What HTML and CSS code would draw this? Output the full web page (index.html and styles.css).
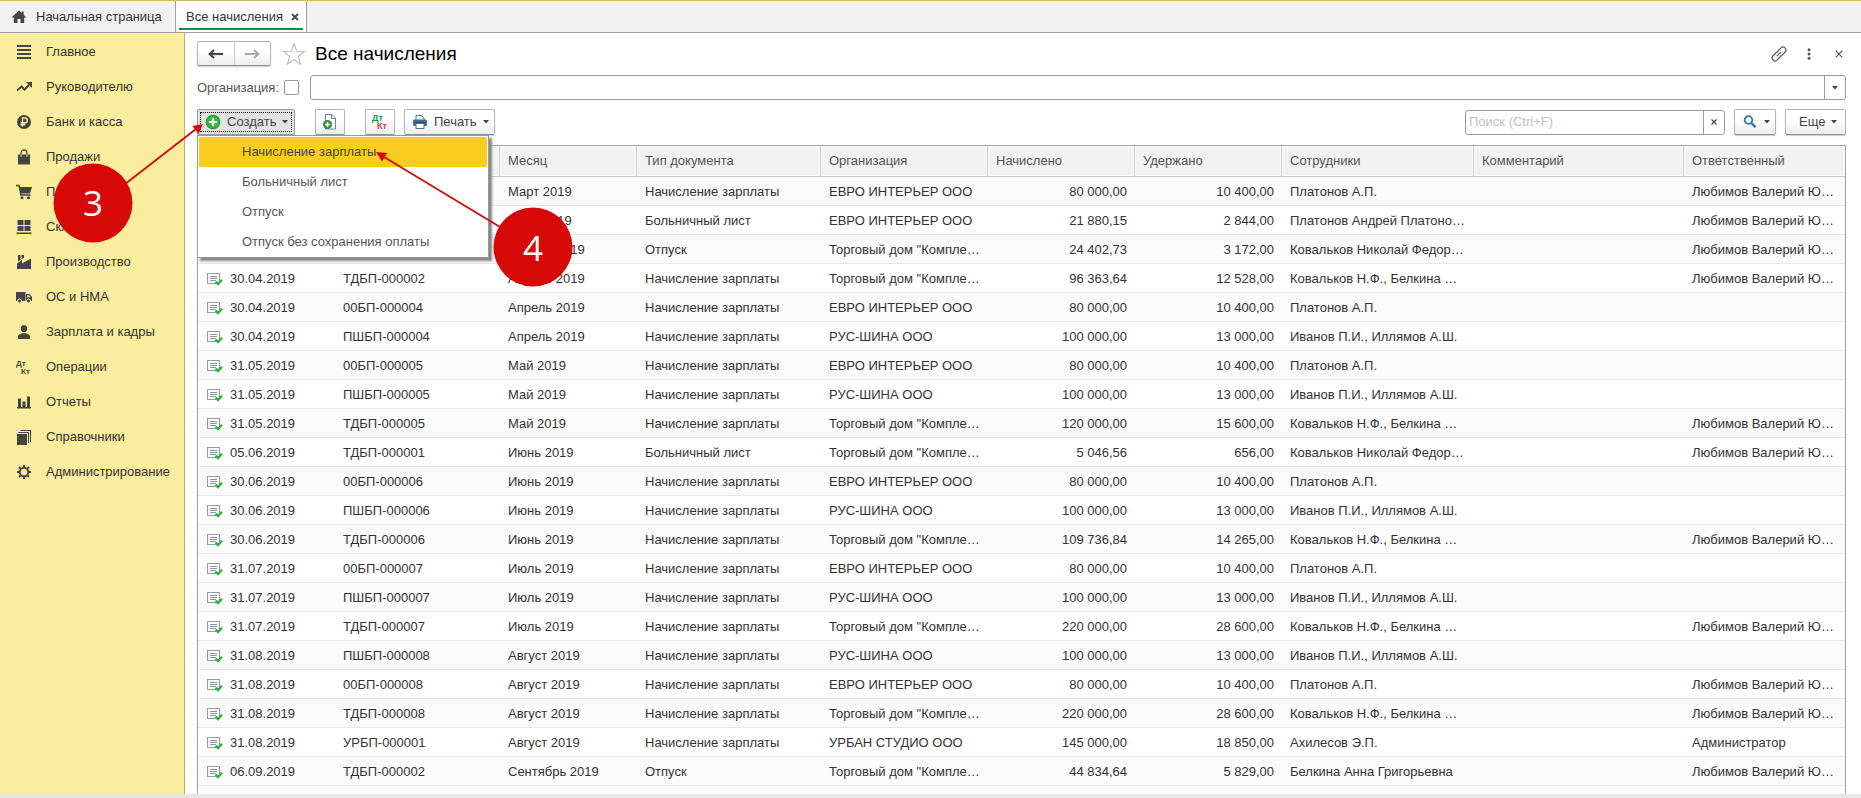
FILE: index.html
```html
<!DOCTYPE html>
<html lang="ru">
<head>
<meta charset="utf-8">
<title>Все начисления</title>
<link rel="stylesheet" href="styles.css">
</head>
<body>
<svg class="sprite" aria-hidden="true">
  <symbol id="doc" viewBox="0 0 16 14">
    <rect x="0.5" y="1.5" width="12" height="10" fill="#fff" stroke="#8d9cb0"/>
    <path d="M3 4.5h7M3 6.5h7M3 8.5h6" stroke="#8796a8" fill="none"/>
    <path d="M8.6 9.6l2.4 2.4 3.9-4.3" stroke="#2bb52f" stroke-width="2.4" fill="none"/>
  </symbol>
  <symbol id="caret" viewBox="0 0 6 4"><path d="M0 0h6L3 3.6z" fill="#444"/></symbol>
</svg>
<div class="app">
  <nav class="tabs">
    <a class="tab home" href="#">
      <svg width="16" height="14" viewBox="0 0 16 14"><path d="M8 0.5L0.5 7.5h2.3V13h3.7V9h3v4h3.7V7.5h2.3L12.7 5V1.5h-2v1.6z" fill="#444"/></svg>
      <span>Начальная страница</span>
    </a>
    <div class="tab active">
      <a href="#">Все начисления</a>
      <button class="tab-close" aria-label="Закрыть вкладку"><svg width="8" height="8" viewBox="0 0 8 8"><path d="M1 1l6 6M7 1L1 7" stroke="#444" stroke-width="1.8"/></svg></button>
    </div>
  </nav>
  <div class="body">
    <nav class="sidebar">
      <a href="#"><svg width="16" height="16" viewBox="0 0 16 16"><path d="M1 2h14M1 6h14M1 10h14M1 14h14" stroke="#444" stroke-width="2"/></svg>Главное</a>
      <a href="#"><svg width="16" height="16" viewBox="0 0 16 16"><path d="M1 11.5l4.5-4 3 3 4.500-4.500" stroke="#444" stroke-width="2" fill="none"/><path d="M10 3h6v6z" fill="#444"/></svg>Руководителю</a>
      <a href="#"><svg width="16" height="16" viewBox="0 0 16 16"><circle cx="8" cy="8" r="7" fill="#444"/><path d="M6.5 12.5V4h2.3a2.4 2.4 0 0 1 0 5H4.6M4.6 10.8h4.6" stroke="#fbed9e" stroke-width="1.4" fill="none"/></svg>Банк и касса</a>
      <a href="#"><svg width="16" height="16" viewBox="0 0 16 16"><path d="M2 5.500h12V15.500H2z" fill="#444"/><path d="M5 6V4a3 3 0 0 1 6 0v2" stroke="#444" stroke-width="1.300" fill="none"/><path d="M5 5.500v2.500M11 5.500v2.500" stroke="#fbed9e"/></svg>Продажи</a>
      <a href="#"><svg width="16" height="16" viewBox="0 0 16 16"><path d="M0 1.5h3L5 11h9.500" stroke="#444" stroke-width="1.500" fill="none"/><path d="M3.500 3H16l-2 6.500H5z" fill="#444"/><circle cx="6" cy="13.800" r="1.500" fill="#444"/><circle cx="12.500" cy="13.800" r="1.500" fill="#444"/></svg>Покупки</a>
      <a href="#"><svg width="16" height="16" viewBox="0 0 16 16"><path d="M1.500 1h6v5h-6zM8.500 1h6v5h-6zM1.500 7h6v5h-6zM8.500 7h6v5h-6zM0.500 13.500h15v1.500h-15z" fill="#444"/></svg>Склад</a>
      <a href="#"><svg width="16" height="16" viewBox="0 0 16 16"><path d="M1 15V9.500l5-3.500v3.500l9-5V15zM2 7.500V1h2.500v5zM5.500 5V1H8v3z" fill="#444"/></svg>Производство</a>
      <a href="#"><svg width="16" height="16" viewBox="0 0 16 16"><path d="M0 3h9.500v9H0zM10 5h3.500L16 8v4h-6z" fill="#444"/><path d="M11.200 6.200h2l1.300 2h-3.300z" fill="#fbed9e"/><g fill="#444" stroke="#fbed9e" stroke-width="1"><circle cx="3.500" cy="12" r="2"/><circle cx="12.500" cy="12" r="2"/></g></svg>ОС и НМА</a>
      <a href="#"><svg width="16" height="16" viewBox="0 0 16 16"><path d="M8 1c2.200 0 3.200 1.500 3.200 3.600S9.800 8.500 8 8.500 4.800 6.700 4.800 4.600 5.800 1 8 1zM2 15v-2.500C2 10.500 5 10 6.200 9.300h3.600C11 10 14 10.500 14 12.500V15z" fill="#444"/></svg>Зарплата и кадры</a>
      <a href="#"><svg class="dk" width="16" height="16" viewBox="0 0 16 16"><text x="0" y="7">Дт</text><text x="5" y="15">Кт</text></svg>Операции</a>
      <a href="#"><svg width="16" height="16" viewBox="0 0 16 16"><path d="M1 13h14v1.500H1zM2 4.500h3V13H2zM6.500 7.500h3V13h-3zM11 2.500h3V13h-3z" fill="#444"/></svg>Отчеты</a>
      <a href="#"><svg width="16" height="16" viewBox="0 0 16 16"><path d="M1 5h10v11H1z" fill="#444"/><path d="M2.500 3.500h10V14M4.500 1.500h10V13" stroke="#444" fill="none"/></svg>Справочники</a>
      <a href="#"><svg width="16" height="16" viewBox="0 0 16 16"><circle cx="8" cy="8" r="4.300" stroke="#444" stroke-width="1.900" fill="none"/><path d="M8 1v2.500M8 12.500V15M1 8h2.500M12.500 8H15M3 3l1.900 1.900M11.100 11.100L13 13M13 3l-1.900 1.900M4.900 11.100L3 13" stroke="#444" stroke-width="2"/></svg>Администрирование</a>
    </nav>
    <main class="content">
      <header class="title-row">
        <div class="nav-pair">
          <button aria-label="Назад"><svg width="15" height="10" viewBox="0 0 15 10"><path d="M3 5h12" stroke="#444" stroke-width="2.200"/><path d="M6 1L1.700 5 6 9" stroke="#444" stroke-width="2.200" fill="none"/></svg></button>
          <button aria-label="Вперед"><svg width="15" height="10" viewBox="0 0 15 10"><path d="M12 5H0" stroke="#aaa" stroke-width="2"/><path d="M9 1l4.300 4L9 9" stroke="#aaa" stroke-width="2" fill="none"/></svg></button>
        </div>
        <button class="plain" aria-label="В избранное"><svg width="24" height="24" viewBox="0 0 24 24"><path d="M12 1.500l2.700 7.700 8 .2-6.400 4.900 2.300 7.800-6.600-4.600-6.600 4.600 2.300-7.800L1.300 9.400l8-.2z" fill="#fff" stroke="#b4bac2" stroke-width="1.100"/></svg></button>
        <h1>Все начисления</h1>
        <div class="window-tools">
          <button class="plain" aria-label="Ссылка"><svg width="16" height="16" viewBox="0 0 16 16" fill="none" stroke="#555" stroke-width="1.200"><path d="M6.500 5.500L10 1.800a2.600 2.600 0 0 1 4 .2 2.600 2.600 0 0 1 .2 4L10.800 9.500a2.500 2.500 0 0 1-2 .5"/><path d="M9.500 10.500L6 14.200a2.600 2.600 0 0 1-4-.2 2.600 2.600 0 0 1-.2-4L5.200 6.500a2.500 2.500 0 0 1 2-.5M5.800 10.200l4.400-4.400"/></svg></button>
          <button class="plain" aria-label="Меню"><svg width="4" height="12" viewBox="0 0 4 12" fill="#555"><circle cx="2" cy="1.700" r="1.500"/><circle cx="2" cy="6" r="1.500"/><circle cx="2" cy="10.300" r="1.500"/></svg></button>
          <button class="plain" aria-label="Закрыть"><svg width="8" height="8" viewBox="0 0 8 8"><path d="M.7.700l6.600 6.600M7.300.700L.700 7.300" stroke="#555" stroke-width="1.200"/></svg></button>
        </div>
      </header>
      <div class="filter-row">
        <label for="org-on">Организация:</label>
        <input type="checkbox" id="org-on">
        <div class="field">
          <input type="text" aria-label="Организация">
          <button aria-label="Выбрать организацию"><svg width="6" height="4"><use href="#caret"/></svg></button>
        </div>
      </div>
      <div class="toolbar">
        <div class="create">
          <button class="btn create-btn"><svg width="16" height="16" viewBox="0 0 16 16"><circle cx="8" cy="8" r="6.700" fill="#3fb549" stroke="#27943a" stroke-width="1.200"/><path d="M8 4v8M4 8h8" stroke="#fff" stroke-width="2.200"/></svg><span>Создать</span><svg width="6" height="4"><use href="#caret"/></svg></button>
          <div class="menu" role="menu">
            <button class="current" role="menuitem">Начисление зарплаты</button>
            <button role="menuitem">Больничный лист</button>
            <button role="menuitem">Отпуск</button>
            <button role="menuitem">Отпуск без сохранения оплаты</button>
          </div>
        </div>
        <button class="btn icon-btn copy-btn" aria-label="Скопировать"><svg width="16" height="16" viewBox="0 0 16 16"><path d="M3.500.500h6.500l3.500 3.500v11h-10z" fill="#fff" stroke="#6c8399"/><path d="M9.500.500V4.500h4" fill="none" stroke="#6c8399"/><circle cx="5.500" cy="10.500" r="4.500" fill="#27943a"/><path d="M5.500 8v5M3 10.500h5" stroke="#fff" stroke-width="1.500"/></svg></button>
        <button class="btn icon-btn" aria-label="Проводки"><svg class="dk dk-color" width="18" height="18" viewBox="0 0 18 18"><text x="1" y="8">Дт</text><text x="6" y="16">Кт</text></svg></button>
        <button class="btn print-btn"><svg width="16" height="16" viewBox="0 0 16 16"><path d="M4 6V1.500h5.500L12 4v2" fill="#fff" stroke="#56758f"/><rect x="1" y="5.500" width="14" height="6.500" rx="1.500" fill="#3f6c91"/><path d="M3 8.500h10" stroke="#1f4664"/><path d="M4 9.500h8v5H4z" fill="#fff" stroke="#56758f"/></svg><span>Печать</span><svg width="6" height="4"><use href="#caret"/></svg></button>
        <div class="field search">
          <input type="text" placeholder="Поиск (Ctrl+F)" aria-label="Поиск">
          <button aria-label="Очистить"><svg width="6" height="6" viewBox="0 0 6 6"><path d="M.500.500l5 5M5.500.500l-5 5" stroke="#444" stroke-width="1.200"/></svg></button>
        </div>
        <button class="btn find-btn" aria-label="Найти"><svg width="14" height="14" viewBox="0 0 14 14"><circle cx="5.500" cy="5" r="3.800" fill="none" stroke="#2d77b4" stroke-width="1.800"/><path d="M8.300 8l4.200 4.200" stroke="#2d77b4" stroke-width="2.400"/></svg><svg width="6" height="4"><use href="#caret"/></svg></button>
        <button class="btn more-btn"><span>Еще</span><svg width="6" height="4"><use href="#caret"/></svg></button>
      </div>
      <div class="grid">
        <table>
          <colgroup><col class="c-date"><col class="c-num"><col class="c-month"><col class="c-type"><col class="c-org"><col class="c-sum"><col class="c-sum"><col class="c-staff"><col class="c-note"><col class="c-resp"></colgroup>
          <thead><tr><th>Дата</th><th>Номер</th><th>Месяц</th><th>Тип документа</th><th>Организация</th><th>Начислено</th><th>Удержано</th><th>Сотрудники</th><th>Комментарий</th><th>Ответственный</th></tr></thead>
          <tbody>
            <tr><td><svg><use href="#doc"/></svg>31.03.2019</td><td>00БП-000003</td><td>Март 2019</td><td>Начисление зарплаты</td><td>ЕВРО ИНТЕРЬЕР ООО</td><td>80 000,00</td><td>10 400,00</td><td>Платонов А.П.</td><td></td><td>Любимов Валерий Ю…</td></tr>
            <tr><td><svg><use href="#doc"/></svg>05.04.2019</td><td>00БП-000001</td><td>Март 2019</td><td>Больничный лист</td><td>ЕВРО ИНТЕРЬЕР ООО</td><td>21 880,15</td><td>2 844,00</td><td>Платонов Андрей Платоно…</td><td></td><td>Любимов Валерий Ю…</td></tr>
            <tr><td><svg><use href="#doc"/></svg>10.04.2019</td><td>ТДБП-000001</td><td>Апрель 2019</td><td>Отпуск</td><td>Торговый дом "Компле…</td><td>24 402,73</td><td>3 172,00</td><td>Ковальков Николай Федор…</td><td></td><td>Любимов Валерий Ю…</td></tr>
            <tr><td><svg><use href="#doc"/></svg>30.04.2019</td><td>ТДБП-000002</td><td>Апрель 2019</td><td>Начисление зарплаты</td><td>Торговый дом "Компле…</td><td>96 363,64</td><td>12 528,00</td><td>Ковальков Н.Ф., Белкина …</td><td></td><td>Любимов Валерий Ю…</td></tr>
            <tr><td><svg><use href="#doc"/></svg>30.04.2019</td><td>00БП-000004</td><td>Апрель 2019</td><td>Начисление зарплаты</td><td>ЕВРО ИНТЕРЬЕР ООО</td><td>80 000,00</td><td>10 400,00</td><td>Платонов А.П.</td><td></td><td></td></tr>
            <tr><td><svg><use href="#doc"/></svg>30.04.2019</td><td>ПШБП-000004</td><td>Апрель 2019</td><td>Начисление зарплаты</td><td>РУС-ШИНА ООО</td><td>100 000,00</td><td>13 000,00</td><td>Иванов П.И., Иллямов А.Ш.</td><td></td><td></td></tr>
            <tr><td><svg><use href="#doc"/></svg>31.05.2019</td><td>00БП-000005</td><td>Май 2019</td><td>Начисление зарплаты</td><td>ЕВРО ИНТЕРЬЕР ООО</td><td>80 000,00</td><td>10 400,00</td><td>Платонов А.П.</td><td></td><td></td></tr>
            <tr><td><svg><use href="#doc"/></svg>31.05.2019</td><td>ПШБП-000005</td><td>Май 2019</td><td>Начисление зарплаты</td><td>РУС-ШИНА ООО</td><td>100 000,00</td><td>13 000,00</td><td>Иванов П.И., Иллямов А.Ш.</td><td></td><td></td></tr>
            <tr><td><svg><use href="#doc"/></svg>31.05.2019</td><td>ТДБП-000005</td><td>Май 2019</td><td>Начисление зарплаты</td><td>Торговый дом "Компле…</td><td>120 000,00</td><td>15 600,00</td><td>Ковальков Н.Ф., Белкина …</td><td></td><td>Любимов Валерий Ю…</td></tr>
            <tr><td><svg><use href="#doc"/></svg>05.06.2019</td><td>ТДБП-000001</td><td>Июнь 2019</td><td>Больничный лист</td><td>Торговый дом "Компле…</td><td>5 046,56</td><td>656,00</td><td>Ковальков Николай Федор…</td><td></td><td>Любимов Валерий Ю…</td></tr>
            <tr><td><svg><use href="#doc"/></svg>30.06.2019</td><td>00БП-000006</td><td>Июнь 2019</td><td>Начисление зарплаты</td><td>ЕВРО ИНТЕРЬЕР ООО</td><td>80 000,00</td><td>10 400,00</td><td>Платонов А.П.</td><td></td><td></td></tr>
            <tr><td><svg><use href="#doc"/></svg>30.06.2019</td><td>ПШБП-000006</td><td>Июнь 2019</td><td>Начисление зарплаты</td><td>РУС-ШИНА ООО</td><td>100 000,00</td><td>13 000,00</td><td>Иванов П.И., Иллямов А.Ш.</td><td></td><td></td></tr>
            <tr><td><svg><use href="#doc"/></svg>30.06.2019</td><td>ТДБП-000006</td><td>Июнь 2019</td><td>Начисление зарплаты</td><td>Торговый дом "Компле…</td><td>109 736,84</td><td>14 265,00</td><td>Ковальков Н.Ф., Белкина …</td><td></td><td>Любимов Валерий Ю…</td></tr>
            <tr><td><svg><use href="#doc"/></svg>31.07.2019</td><td>00БП-000007</td><td>Июль 2019</td><td>Начисление зарплаты</td><td>ЕВРО ИНТЕРЬЕР ООО</td><td>80 000,00</td><td>10 400,00</td><td>Платонов А.П.</td><td></td><td></td></tr>
            <tr><td><svg><use href="#doc"/></svg>31.07.2019</td><td>ПШБП-000007</td><td>Июль 2019</td><td>Начисление зарплаты</td><td>РУС-ШИНА ООО</td><td>100 000,00</td><td>13 000,00</td><td>Иванов П.И., Иллямов А.Ш.</td><td></td><td></td></tr>
            <tr><td><svg><use href="#doc"/></svg>31.07.2019</td><td>ТДБП-000007</td><td>Июль 2019</td><td>Начисление зарплаты</td><td>Торговый дом "Компле…</td><td>220 000,00</td><td>28 600,00</td><td>Ковальков Н.Ф., Белкина …</td><td></td><td>Любимов Валерий Ю…</td></tr>
            <tr><td><svg><use href="#doc"/></svg>31.08.2019</td><td>ПШБП-000008</td><td>Август 2019</td><td>Начисление зарплаты</td><td>РУС-ШИНА ООО</td><td>100 000,00</td><td>13 000,00</td><td>Иванов П.И., Иллямов А.Ш.</td><td></td><td></td></tr>
            <tr><td><svg><use href="#doc"/></svg>31.08.2019</td><td>00БП-000008</td><td>Август 2019</td><td>Начисление зарплаты</td><td>ЕВРО ИНТЕРЬЕР ООО</td><td>80 000,00</td><td>10 400,00</td><td>Платонов А.П.</td><td></td><td>Любимов Валерий Ю…</td></tr>
            <tr><td><svg><use href="#doc"/></svg>31.08.2019</td><td>ТДБП-000008</td><td>Август 2019</td><td>Начисление зарплаты</td><td>Торговый дом "Компле…</td><td>220 000,00</td><td>28 600,00</td><td>Ковальков Н.Ф., Белкина …</td><td></td><td>Любимов Валерий Ю…</td></tr>
            <tr><td><svg><use href="#doc"/></svg>31.08.2019</td><td>УРБП-000001</td><td>Август 2019</td><td>Начисление зарплаты</td><td>УРБАН СТУДИО ООО</td><td>145 000,00</td><td>18 850,00</td><td>Ахилесов Э.П.</td><td></td><td>Администратор</td></tr>
            <tr><td><svg><use href="#doc"/></svg>06.09.2019</td><td>ТДБП-000002</td><td>Сентябрь 2019</td><td>Отпуск</td><td>Торговый дом "Компле…</td><td>44 834,64</td><td>5 829,00</td><td>Белкина Анна Григорьевна</td><td></td><td>Любимов Валерий Ю…</td></tr>
          </tbody>
        </table>
      </div>
    </main>
  </div>
  <svg class="callouts" width="600" height="300" viewBox="0 0 600 300">
    <g fill="#d60808" stroke="#d60808">
      <path d="M120 188L196 129M510 233L384 157" stroke-width="1.800" fill="none"/>
      <path d="M203 124l-4.500 10-6-8zM376 152l11 1-5 8.500z" stroke="none"/>
      <circle cx="93" cy="203" r="39.500" stroke="none"/>
      <circle cx="533" cy="247" r="39.500" stroke="none"/>
    </g>
    <text x="93" y="216">3</text>
    <text x="533" y="261">4</text>
  </svg>
</div>
</body>
</html>
```
FILE: styles.css
```css
* { box-sizing: border-box; }

body {
  margin: 0;
  background: #fff;
  color: #333;
  font: 13px/16px "Liberation Sans", Arial, sans-serif;
}

button, input { font: inherit; color: inherit; }
button { padding: 0; cursor: pointer; }
a { color: inherit; text-decoration: none; }
svg { display: block; flex: none; }
.sprite { position: absolute; width: 0; height: 0; }

.app {
  position: relative;
  display: flex;
  flex-direction: column;
  min-height: 100vh;
  border-bottom: 4px solid #e6e6e6;
}

/* Tabs */
.tabs {
  display: flex;
  height: 33px;
  background: #f1f1f1;
  border-top: 1px solid #cdb96a;
  border-bottom: 1px solid #a0a0a0;
}
.tab {
  display: flex;
  align-items: center;
  border-right: 1px solid #a0a0a0;
}
.home { gap: 9px; width: 176px; padding-left: 11px; }
.active {
  position: relative;
  gap: 8px;
  width: 131px;
  padding-left: 10px;
  background: #fff;
}
.active::after {
  content: "";
  position: absolute;
  left: 3px;
  right: 3px;
  bottom: 2px;
  height: 2px;
  background: #009646;
}
.tab-close { border: 0; background: none; }

/* Sections panel */
.body { display: flex; flex: 1; }
.sidebar {
  flex: none;
  width: 185px;
  padding-top: 1px;
  background: #fbed9e;
  border-right: 1px solid #bfae5b;
}
.sidebar a {
  display: flex;
  align-items: center;
  gap: 14px;
  height: 35px;
  padding-left: 16px;
}
.dk text { font-size: 8px; font-weight: 700; fill: #444; }
.dk-color text { font-size: 9px; fill: #0b9a4a; }
.dk-color text + text { fill: #e23b3b; }

/* Content */
.content {
  display: flex;
  flex: 1;
  flex-direction: column;
  min-width: 0;
  padding: 8px 15px 0 12px;
}
.title-row { display: flex; align-items: center; height: 25px; }
.nav-pair {
  display: flex;
  width: 74px;
  height: 25px;
  margin-right: 11px;
  border: 1px solid #b4b4b4;
  border-bottom-color: #909090;
  border-radius: 2px;
  background: linear-gradient(#fff 40%, #ececec);
  box-shadow: 0 1px 1px #ccc;
}
.nav-pair button {
  display: flex;
  flex: 1;
  align-items: center;
  justify-content: center;
  border: 0;
  background: none;
}
.nav-pair button + button { border-left: 1px solid #c8c8c8; }
.plain { border: 0; background: none; }
h1 {
  margin: 0 0 0 9px;
  color: #000;
  font-size: 19px;
  font-weight: 400;
  line-height: 24px;
}
.window-tools {
  display: flex;
  align-items: center;
  gap: 20px;
  margin-left: auto;
  padding-right: 3px;
}
.window-tools .plain + .plain + .plain { margin-left: 4px; }

.filter-row { display: flex; align-items: center; margin-top: 9px; color: #555; }
.filter-row input[type="checkbox"] {
  appearance: none;
  width: 15px;
  height: 15px;
  margin: 0 11px 0 0;
  border: 1px solid #999;
  border-radius: 2px;
  background: #fff;
}
.filter-row label { width: 87px; }
.field {
  display: flex;
  height: 25px;
  border: 1px solid #999;
  border-radius: 3px;
  background: #fff;
}
.filter-row .field { flex: 1; }
.field input {
  flex: 1;
  min-width: 0;
  padding: 0 3px;
  border: 0;
  outline: 0;
  background: none;
}
.field input::placeholder { color: #c0c0c4; opacity: 1; }
.field button {
  display: flex;
  align-items: center;
  justify-content: center;
  width: 21px;
  border: 0;
  border-left: 1px solid #999;
  background: none;
}

.toolbar { display: flex; align-items: center; margin-top: 9px; }
.btn {
  display: flex;
  align-items: center;
  height: 26px;
  border: 1px solid #b4b4b4;
  border-bottom-color: #909090;
  border-radius: 2px;
  background: linear-gradient(#fff 40%, #ececec);
  box-shadow: 0 1px 1px #ccc;
  color: #444;
}
.icon-btn { justify-content: center; width: 30px; }
.create { position: relative; }
.create-btn {
  gap: 6px;
  width: 98px;
  padding-left: 7px;
  border-color: #999;
  background: #e2e2e2;
  outline: 1px dotted #000;
  outline-offset: -4px;
}
.copy-btn { margin: 0 20px; }
.print-btn { gap: 6px; width: 91px; margin-left: 9px; padding-left: 7px; }
.search { width: 260px; margin-left: auto; }
.find-btn { gap: 7px; width: 42px; margin: 0 9px; padding-left: 8px; }
.more-btn { gap: 6px; width: 61px; padding-left: 13px; }

.menu {
  position: absolute;
  z-index: 2;
  top: 26px;
  left: 0;
  width: 292px;
  padding: 1px 1px 0;
  border: 1px solid #999;
  background: #fff;
  box-shadow: 3px 3px 2px #888;
}
.menu button {
  display: block;
  width: 100%;
  height: 30px;
  padding-left: 43px;
  border: 0;
  background: none;
  color: #555;
  text-align: left;
}
.menu .current { background: #facc20; color: #444; }

/* Document list */
.grid {
  flex: 1;
  margin-top: 10px;
  border: 1px solid #a0a0a0;
  border-bottom: 0;
}
table {
  width: 100%;
  table-layout: fixed;
  border-collapse: separate;
  border-spacing: 0;
}
.c-date { width: 137px; }
.c-num { width: 165px; }
.c-month { width: 137px; }
.c-type { width: 184px; }
.c-org { width: 167px; }
.c-sum { width: 147px; }
.c-staff { width: 192px; }
.c-note { width: 210px; }
.c-resp { width: 161px; }
th {
  height: 31px;
  padding: 0 8px;
  border-right: 1px solid #c8c8c8;
  border-bottom: 1px solid #c8c8c8;
  background: #f2f2f2;
  box-shadow: inset 0 0 0 1px #fff;
  color: #555;
  font-weight: 400;
  text-align: left;
}
th:last-child { border-right: 0; }
td {
  height: 29px;
  padding: 2px 8px 0;
  overflow: hidden;
  border-bottom: 1px solid #e6e6e6;
  white-space: nowrap;
}
td:first-child { padding-left: 9px; }
tr:nth-child(odd) td { background: #fafafa; }
td:nth-child(6), td:nth-child(7) { text-align: right; }
td svg {
  display: inline-block;
  width: 16px;
  height: 14px;
  margin-right: 7px;
  vertical-align: -3px;
}

/* Numbered step markers over the page */
.callouts {
  position: absolute;
  z-index: 3;
  top: 0;
  left: 0;
  pointer-events: none;
}
.callouts text {
  fill: #fff;
  font-family: "Open Sans", "Noto Sans", sans-serif;
  font-size: 35px;
  font-weight: 500;
  text-anchor: middle;
}
```
